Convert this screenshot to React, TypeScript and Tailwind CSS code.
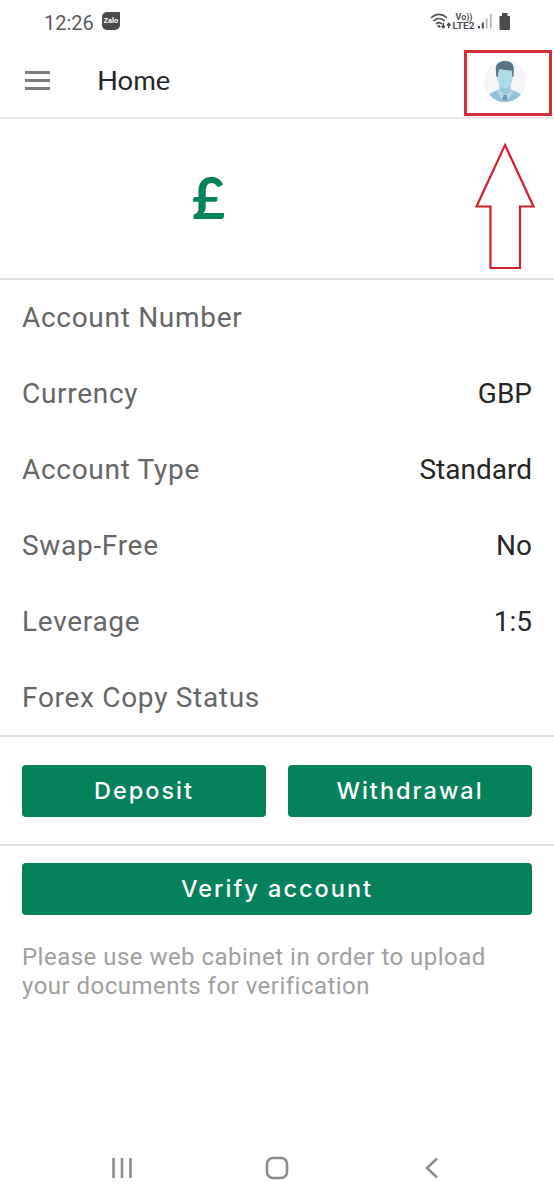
import React from 'react';

const rows = [
  { label: 'Account Number', value: '' },
  { label: 'Currency', value: 'GBP' },
  { label: 'Account Type', value: 'Standard' },
  { label: 'Swap-Free', value: 'No' },
  { label: 'Leverage', value: '1:5' },
  { label: 'Forex Copy Status', value: '' },
];

const StatusIcons: React.FC = () => (
  <svg width="82" height="24" viewBox="0 0 82 24" fill="none">
    {/* Wifi */}
    <g stroke="#555" strokeWidth="1.7" strokeLinecap="round">
      <path d="M1.500 7.500C6 3.200 12 3.200 16.500 7.500" />
      <path d="M4 10.600C7 7.800 11 7.800 14 10.600" />
      <path d="M6.600 13.600C8.200 12.200 9.800 12.200 11.400 13.600" />
    </g>
    <circle cx="9" cy="16.300" r="1.400" fill="#555" />
    <path d="M13.300 13V17.500M11.700 16L13.300 17.800L14.900 16M18.700 18V13.500M17 15.500L18.700 13.300L20.500 15.500" stroke="#444" strokeWidth="1.400" />
    {/* Network type */}
    <text x="25.500" y="9.500" fontSize="9" fontWeight="600" fill="#4a4a4a" textLength="17" lengthAdjust="spacingAndGlyphs">Vo))</text>
    <text x="22.500" y="19" fontSize="9.500" fontWeight="600" fill="#4a4a4a" textLength="22" lengthAdjust="spacingAndGlyphs">LTE2</text>
    {/* Signal */}
    <path d="M49 16V18.500M52.800 12.500V18.500" stroke="#4a4a4a" strokeWidth="2" />
    <path d="M56.700 8.500V18.500M60.800 4V18.500" stroke="#b5b5b5" strokeWidth="1.800" />
    {/* Battery */}
    <path d="M72 3H77.500V6H80V19Q80 20 79 20H70.500Q69.500 20 69.500 19V6H72Z" fill="#4b4b4b" />
  </svg>
);

const Avatar: React.FC = () => (
  <svg width="44" height="44" viewBox="0 0 44 44">
    <defs>
      <clipPath id="avatar">
        <circle cx="22" cy="22" r="21" />
      </clipPath>
    </defs>
    <circle cx="22" cy="22" r="21" fill="#f5f5f7" />
    <g clipPath="url(#avatar)">
      <path d="M2 44C3 36 8 33.500 16 30.500L22 34L28 30.500C36 33.500 41 36 42 44Z" fill="#94c2dc" />
      <path d="M16.500 25H27.500V31L22 37L16.500 31Z" fill="#9cc9df" />
      <path d="M15.500 31L22 36L18 39.500L13.500 32ZM28.500 31L22 36L26 39.500L30.500 32Z" fill="#b4d8ea" />
      <path d="M20.500 36H23.500L24.200 41H19.800Z" fill="#6596b5" />
    </g>
    <path d="M14.500 12C14.500 6.500 29.500 6.500 29.500 12V19C29.500 25 25.500 29.500 22 29.500C18.500 29.500 14.500 25 14.500 19Z" fill="#b0d9ea" />
    <path d="M13.300 17.500L12.700 9C13.500 4 17 2 22 2C27.500 2 31 5 30.800 10L30.500 17.500L29.300 18L28.700 11.500C24 11.500 20 11 17 10C15.500 11 15.300 13 14.800 18Z" fill="#587587" />
  </svg>
);

const buttonClass =
  "flex h-[52px] items-center justify-center rounded-[4px] bg-[#05825c] font-['Inter'] text-[23.5px] font-medium leading-none text-white";

export default function App() {
  return (
    <div className="relative flex h-[1200px] w-[554px] flex-col overflow-hidden bg-white font-['Roboto',sans-serif]">
      {/* Status bar */}
      <div className="flex h-11 shrink-0 items-center justify-between pl-[44px] pr-[42px]">
        <div className="flex items-center gap-[8px]">
          <span className="pt-[2px] text-[20px] leading-6 text-[#5c5c5c]">12:26</span>
          <span className="mb-[2px] flex h-[18px] w-[18px] items-center justify-center rounded-[5px] rounded-tr-none bg-[#4b4b4b] text-[7.5px] font-bold leading-none text-white">
            Zalo
          </span>
        </div>
        <StatusIcons />
      </div>

      {/* Toolbar */}
      <header className="flex h-[75px] shrink-0 items-center border-b-2 border-[#e9e9e9] pl-[25px] pr-[27px]">
        <div className="flex w-[72px] flex-col gap-[5px] pb-px">
          <i className="h-[3px] w-[25px] bg-[#7d7d7d]" />
          <i className="h-[3px] w-[25px] bg-[#7d7d7d]" />
          <i className="h-[3px] w-[25px] bg-[#7d7d7d]" />
        </div>
        <h1 className="flex-1 pb-[2px] font-['Lato'] text-[27.5px] leading-8 text-[#262626]">Home</h1>
        <Avatar />
      </header>

      {/* Balance */}
      <div className="flex h-[161px] shrink-0 items-center border-b-2 border-[#dedede] pb-[2px] pl-[192px]">
        <span className="font-['Lato'] text-[57px] font-bold leading-none text-[#05825c]">£</span>
      </div>

      <dl className="h-[457px] shrink-0 border-b-2 border-[#dedede] px-[22px] text-[28px]">
        {rows.map((row) => (
          <div key={row.label} className="flex h-[76px] items-center justify-between">
            <dt className="tracking-[0.7px] text-[#666]">{row.label}</dt>
            <dd className="text-[#262626]">{row.value}</dd>
          </div>
        ))}
      </dl>

      <div className="flex h-[109px] shrink-0 gap-[22px] border-b-2 border-[#dedede] px-[22px] pt-[28px]">
        <button className={`${buttonClass} w-[244px] tracking-[2px]`}>Deposit</button>
        <button className={`${buttonClass} w-[244px] tracking-[2px]`}>Withdrawal</button>
      </div>

      <div className="flex flex-1 flex-col px-[22px] pt-[17px]">
        <button className={`${buttonClass} shrink-0 tracking-[2px]`}>Verify account</button>
        <p className="mt-[28px] whitespace-nowrap text-[24px] leading-[29px] tracking-[0.48px] text-[#a0a0a0]">
          Please use web cabinet in order to upload
          <br />
          your documents for verification
        </p>
      </div>

      {/* System navigation */}
      <nav className="flex h-16 shrink-0 items-center pl-[111px]">
        <svg width="22" height="22" viewBox="0 0 22 22" stroke="#8b8b8b" strokeWidth="2.500">
          <path d="M2.500 1V21M11 1V21M19.500 1V21" />
        </svg>
        <svg className="ml-[132px]" width="24" height="24" viewBox="0 0 24 24" fill="none" stroke="#8b8b8b" strokeWidth="2.500">
          <rect x="2" y="2" width="20" height="20" rx="6" />
        </svg>
        <svg className="ml-[136px]" width="14" height="22" viewBox="0 0 14 22" fill="none" stroke="#8b8b8b" strokeWidth="2.500">
          <path d="M12 1.500L2 11L12 20.500" />
        </svg>
      </nav>

      {/* Highlight around the avatar, with the arrow under it */}
      <div className="absolute left-[464px] top-[50px] h-[66px] w-[88px] border-[3px] border-[#d4303a]" />
      <svg className="absolute left-[474px] top-[142px]" width="62" height="128" viewBox="0 0 62 128" fill="none" stroke="#d4202c" strokeWidth="2.2">
        <path d="M31 3L59.500 64.500H46V126H16.500V64.500H2.500Z" />
      </svg>
    </div>
  );
}
